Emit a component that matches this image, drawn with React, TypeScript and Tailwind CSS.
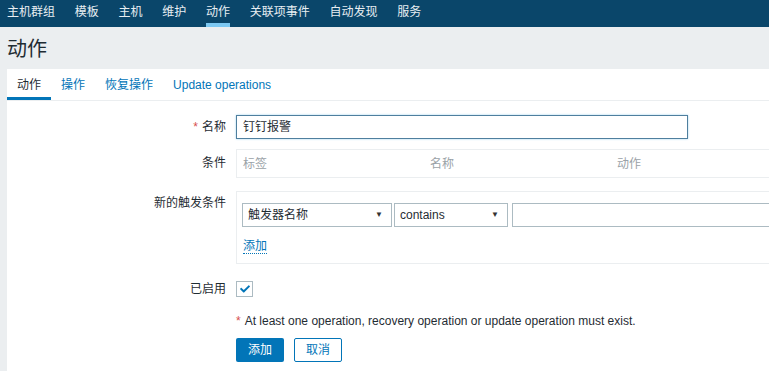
import { FaCheck } from "react-icons/fa";

const navItems = ["主机群组", "模板", "主机", "维护", "动作", "关联项事件", "自动发现", "服务"];
const tabs = ["动作", "操作", "恢复操作", "Update operations"];

function Label({ children, required }: { children: React.ReactNode; required?: boolean }) {
  return (
    <div className="w-[219px] shrink-0 text-right leading-[24px] text-[#1f2c33]">
      {required && <span className="text-[#d64e4e] mr-[4px]">*</span>}
      {children}
    </div>
  );
}

function Select({ value, width }: { value: string; width: string }) {
  return (
    <div className={`${width} h-[24px] border border-[#acbbc2] bg-white flex items-center justify-between pl-[5px] pr-[8px] text-[#1f2c33]`}>
      <span>{value}</span>
      <span className="text-[8px] text-[#333]">▼</span>
    </div>
  );
}

export default function App() {
  return (
    <div
      className="w-[769px] h-[371px] overflow-hidden bg-[#ebeef0] text-[12px]"
      style={{ fontFamily: '"Liberation Sans", "Noto Sans CJK SC", sans-serif' }}
    >
      {/* ===== TOP NAV ===== */}
      <nav className="h-[27px] bg-[#0a466a] flex pl-[7px] gap-[19.75px]">
        {navItems.map((item) => (
          <div
            key={item}
            className={`h-[27px] leading-[25px] text-[#e8eef2] ${
              item === "动作" ? "shadow-[inset_0_-4px_0_#7cc8f2]" : ""
            }`}
          >
            {item}
          </div>
        ))}
      </nav>

      {/* ===== TITLE ===== */}
      <h1 className="h-[42px] leading-[44px] pl-[7px] text-[20px] text-[#1f2c33]">动作</h1>

      {/* ===== CONTENT ===== */}
      <div className="ml-[7px] bg-white w-[900px] h-[302px]">
        {/* tabs */}
        <div className="flex border-b border-[#ebeef0]">
          {tabs.map((t, i) => (
            <div
              key={t}
              className={`h-[31px] leading-[32px] px-[10px] ${
                i === 0
                  ? "text-[#1f2c33] shadow-[inset_0_-3px_0_#0275b8]"
                  : "text-[#0275b8]"
              }`}
            >
              {t}
            </div>
          ))}
        </div>

        {/* name */}
        <div className="flex gap-[10px] mt-[14px]">
          <Label required>名称</Label>
          <div className="w-[452px] h-[24px] border border-[#4f7f9e] shadow-[0_0_2px_#9fd3ef] pl-[6px] leading-[22px] text-[#1f2c33]">
            钉钉报警
          </div>
        </div>

        {/* conditions */}
        <div className="flex gap-[10px] mt-[10px]">
          <Label>
            <span className="relative top-[2px]">条件</span>
          </Label>
          <div className="w-[600px] h-[29px] border border-[#ebeef0] flex items-center text-[#9aa2a7]">
            <div className="w-[187px] pl-[6px]">标签</div>
            <div className="w-[187px] pl-[6px]">名称</div>
            <div className="w-[187px] pl-[6px]">动作</div>
          </div>
        </div>

        {/* new trigger condition */}
        <div className="flex gap-[10px] mt-[13px]">
          <Label>新的触发条件</Label>
          <div className="w-[600px] h-[73px] border border-[#ebeef0] pl-[5px] pt-[11px]">
            <div className="flex gap-[2px]">
              <Select value="触发器名称" width="w-[150px]" />
              <Select value="contains" width="w-[114px]" />
              <div className="ml-[2px] w-[300px] h-[24px] border border-[#acbbc2]" />
            </div>
            <div className="mt-[10px] pl-[1px]">
              <span className="text-[#0275b8] border-b border-dotted border-[#0275b8] leading-[16px]">添加</span>
            </div>
          </div>
        </div>

        {/* enabled */}
        <div className="flex gap-[10px] mt-[13px] items-center">
          <Label>已启用</Label>
          <div className="w-[17px] h-[16px] border border-[#acbbc2] flex items-center justify-center text-[#0275b8]">
            <FaCheck size={10} />
          </div>
        </div>

        {/* error */}
        <div className="flex gap-[10px] mt-[8px]">
          <div className="w-[219px] shrink-0" />
          <div className="leading-[24px] text-[#1f2c33]">
            <span className="text-[#d64e4e] mr-[4px]">*</span>
            At least one operation, recovery operation or update operation must exist.
          </div>
        </div>

        {/* buttons */}
        <div className="flex gap-[10px] mt-[5px]">
          <div className="w-[219px] shrink-0" />
          <div className="flex gap-[10px]">
            <button className="w-[48px] h-[24px] rounded-[2px] bg-[#0275b8] text-white">添加</button>
            <button className="w-[48px] h-[24px] rounded-[2px] border border-[#0275b8] bg-white text-[#0275b8]">取消</button>
          </div>
        </div>
      </div>
    </div>
  );
}
